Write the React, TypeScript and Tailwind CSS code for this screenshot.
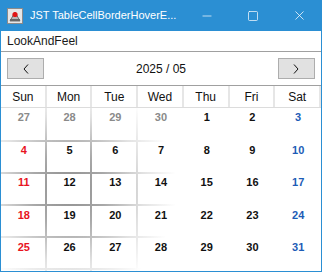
import { Minus, Square, X } from "lucide-react";

const days = ["Sun", "Mon", "Tue", "Wed", "Thu", "Fri", "Sat"];

const weeks = [
	[27, 28, 29, 30, 1, 2, 3],
	[4, 5, 6, 7, 8, 9, 10],
	[11, 12, 13, 14, 15, 16, 17],
	[18, 19, 20, 21, 22, 23, 24],
	[25, 26, 27, 28, 29, 30, 31],
];

function dayColor(week: number, col: number, day: number) {
	if (week === 0 && day > 20) return "text-[#8a8a8a]";
	if (col === 0) return "text-[#e8141e]";
	if (col === 6) return "text-[#1d5cb6]";
	return "text-[#111]";
}

// grid lines that fade out from the hovered cell (Mon / 12)
function HoverGrid() {
	const colW = 320 / 7;
	const xs = [1, 2, 3, 4, 5, 6, 7].map((i) => Math.round(colW * i) - 2);
	const ys = [32, 64, 96, 128, 160];
	return (
		<svg className="pointer-events-none absolute inset-0" width="320" height="163" viewBox="0 0 320 163">
			<defs>
				<radialGradient id="hover" gradientUnits="userSpaceOnUse" cx="68" cy="81" r="108">
					<stop offset="0" stopColor="#8c8c8c" />
					<stop offset="0.35" stopColor="#a8a8a8" />
					<stop offset="0.7" stopColor="#e2e2e2" />
					<stop offset="1" stopColor="#ffffff" />
				</radialGradient>
			</defs>
			{xs.map((x) => (
				<rect key={"v" + x} x={x} y={0} width={2} height={163} fill="url(#hover)" />
			))}
			{ys.map((y) => (
				<rect key={"h" + y} x={0} y={y} width={320} height={2} fill="url(#hover)" />
			))}
		</svg>
	);
}

function AppIcon() {
	return (
		<svg width="16" height="16" viewBox="0 0 16 16">
			<rect x="0.5" y="0.5" width="15" height="15" fill="#e6e6e6" stroke="#8a8a8a" />
			<path d="M3 13 L8 4 L13 13 Z" fill="#b8b8b8" stroke="#555" strokeWidth="0.8" />
			<rect x="3" y="11" width="10" height="2" fill="#666" />
			<circle cx="8" cy="6.5" r="2.6" fill="#e01515" />
		</svg>
	);
}

function Chevron({ dir }: { dir: "left" | "right" }) {
	return (
		<svg width="6" height="10" viewBox="0 0 6 10">
			<polyline
				points={dir === "left" ? "5,0.5 1,5 5,9.5" : "1,0.5 5,5 1,9.5"}
				fill="none"
				stroke="#111"
				strokeWidth="1"
			/>
		</svg>
	);
}

export default function App() {
	return (
		<div className="flex h-[272px] w-[322px] flex-col font-['Liberation_Sans',Arial,sans-serif]">
			<div className="flex h-[31px] shrink-0 items-center bg-[#2b8fd3] text-white">
				<div className="ml-[7px] flex h-[16px] w-[16px] shrink-0 items-center">
					<AppIcon />
				</div>
				<span className="ml-[7px] whitespace-nowrap text-[11px] leading-none">JST TableCellBorderHoverE...</span>
				<div className="ml-auto flex h-full shrink-0">
					<div className="flex w-[46px] items-center justify-center">
						<Minus className="h-[14px] w-[14px]" strokeWidth={1.2} />
					</div>
					<div className="flex w-[46px] items-center justify-center">
						<Square className="h-[12px] w-[12px]" strokeWidth={1.4} />
					</div>
					<div className="flex w-[46px] items-center justify-center">
						<X className="h-[15px] w-[15px]" strokeWidth={1.2} />
					</div>
				</div>
			</div>

			<div className="flex flex-1 flex-col border-x border-b border-[#2b8fd3] bg-white">
				<div className="flex h-[21px] shrink-0 items-center border-b border-[#a0a0a0] pl-[6px] text-[12px] text-[#1a1a1a]">
					LookAndFeel
				</div>

				<div className="flex h-[33px] shrink-0 items-center justify-between px-[6px]">
					<button className="flex h-[21px] w-[37px] items-center justify-center border border-[#adadad] bg-[#e1e1e1]">
						<Chevron dir="left" />
					</button>
					<span className="text-[12px] text-[#111]">2025 / 05</span>
					<button className="flex h-[21px] w-[37px] items-center justify-center border border-[#adadad] bg-[#e1e1e1]">
						<Chevron dir="right" />
					</button>
				</div>

				<div className="grid h-[23px] shrink-0 grid-cols-7 border-y border-t-[#a0a0a0] border-b-[#dcdcdc]">
					{days.map((d) => (
						<div key={d} className="flex items-center justify-center border-r-2 border-[#e6e6e6] text-[12px] text-[#111]">
							{d}
						</div>
					))}
				</div>

				<div className="relative grid flex-1 grid-cols-7 grid-rows-5">
					<HoverGrid />
					{weeks.map((week, w) =>
						week.map((day, c) => (
							<div key={w + "-" + c} className="relative flex justify-center pt-[3px]">
								<span className={"text-[11px] font-bold leading-[13px] " + dayColor(w, c, day)}>{day}</span>
							</div>
						)),
					)}
				</div>
			</div>
		</div>
	);
}
